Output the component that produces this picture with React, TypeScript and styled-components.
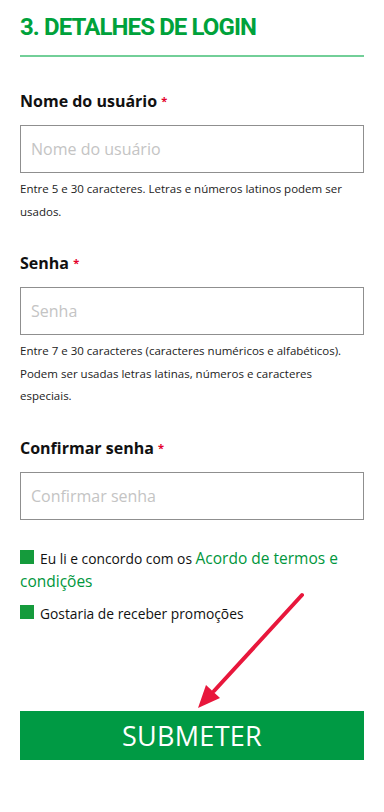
import { FC } from "react";
import styled, { createGlobalStyle } from "styled-components";

const GlobalStyle = createGlobalStyle`
  body {
    margin: 0;
    background: #fff;
    font-family: "Open Sans", "Liberation Sans", sans-serif;
  }
`;

const App: FC = () => {
  return (
    <Page>
      <GlobalStyle />
      <Title>3. DETALHES DE LOGIN</Title>
      <Divider />

      <Field>
        <Label>
          Nome do usuário <Required>*</Required>
        </Label>
        <Input placeholder="Nome do usuário" />
        <Hint>Entre 5 e 30 caracteres. Letras e números latinos podem ser usados.</Hint>
      </Field>

      <Field>
        <Label>
          Senha <Required>*</Required>
        </Label>
        <Input type="password" placeholder="Senha" />
        <Hint>
          Entre 7 e 30 caracteres (caracteres numéricos e alfabéticos). Podem ser usadas letras
          latinas, números e caracteres especiais.
        </Hint>
      </Field>

      <Field>
        <Label>
          Confirmar senha <Required>*</Required>
        </Label>
        <Input type="password" placeholder="Confirmar senha" />
      </Field>

      <Checks>
        <CheckRow>
          <Box />
          Eu li e concordo com os <TermsLink>Acordo de termos e condições</TermsLink>
        </CheckRow>
        <CheckRow>
          <Box />
          Gostaria de receber promoções
        </CheckRow>
      </Checks>

      <SubmitWrap>
        <Arrow viewBox="0 0 112 120" width="112" height="120">
          <line x1="106" y1="4" x2="18" y2="100" stroke="#e8173c" strokeWidth="4" strokeLinecap="round" />
          <polygon points="2,117 10,94 24,107" fill="#e8173c" />
        </Arrow>
        <SubmitButton>SUBMETER</SubmitButton>
      </SubmitWrap>
    </Page>
  );
};

export default App;

const Page = styled.div`
  display: flex;
  flex-direction: column;
  padding: 12px 20px 50px;
`;

const Title = styled.h2`
  margin: 0;
  font-family: Roboto, "Liberation Sans", sans-serif;
  font-weight: 700;
  font-size: 24px;
  letter-spacing: -0.9px;
  color: #00a23b;
  line-height: 30px;
`;

const Divider = styled.div`
  height: 2px;
  background: #72cf98;
  margin: 13px 0 4px;
`;

const Field = styled.div`
  margin-top: 29px;
`;

const Label = styled.div`
  font-weight: 700;
  font-size: 16px;
  color: #111;
  line-height: 22px;
  margin-bottom: 13px;
`;

const Required = styled.span`
  color: #e4002b;
  font-size: 11px;
  vertical-align: top;
`;

const Input = styled.input`
  box-sizing: border-box;
  display: block;
  width: 100%;
  height: 48px;
  border: 1px solid #8f8f8f;
  padding: 0 10px;
  font-family: "Open Sans", "Liberation Sans", sans-serif;
  font-size: 16px;
  outline: none;
  &::placeholder {
    color: #c4c4c4;
  }
`;

const Hint = styled.p`
  margin: 5px 0 0;
  font-size: 11.5px;
  line-height: 22.5px;
  color: #222;
`;

const Checks = styled.div`
  margin-top: 27px;
  display: flex;
  flex-direction: column;
  gap: 10px;
`;

const CheckRow = styled.div`
  font-size: 13.8px;
  line-height: 22px;
  color: #111;
`;

const Box = styled.span`
  display: inline-block;
  width: 14px;
  height: 14px;
  background: #159b3c;
  margin-right: 6px;
  vertical-align: 0px;
`;

const TermsLink = styled.a`
  color: #00963c;
  font-size: 15.5px;
  text-decoration: none;
`;

const SubmitWrap = styled.div`
  position: relative;
  margin-top: 86px;
`;

const Arrow = styled.svg`
  position: absolute;
  left: 176px;
  top: -120px;
`;

const SubmitButton = styled.button`
  display: block;
  width: 100%;
  height: 49px;
  border: none;
  background: #009a44;
  color: #fff;
  font-family: "Open Sans", "Liberation Sans", sans-serif;
  font-size: 27px;
  letter-spacing: 0.3px;
`;
